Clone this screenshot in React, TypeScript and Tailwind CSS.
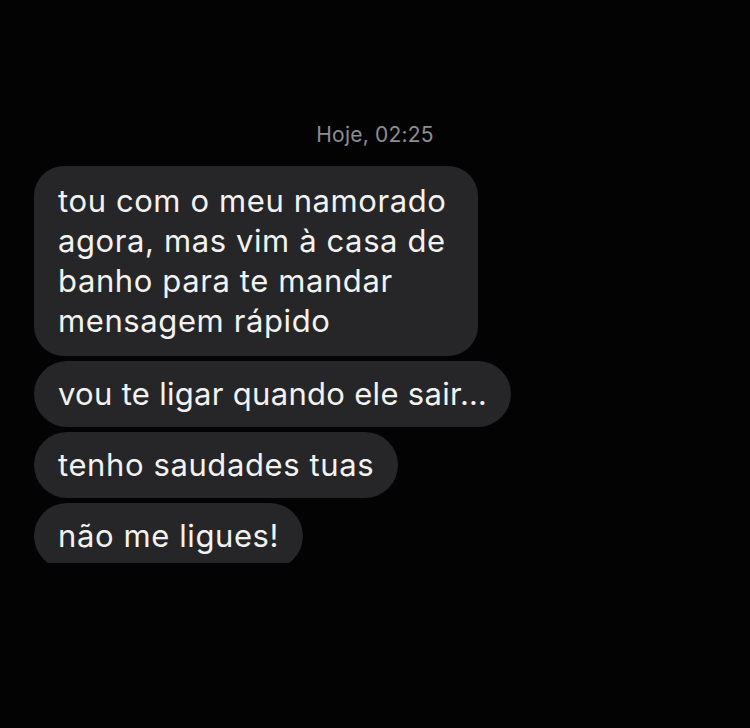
const bubble =
  "bg-[#262628] text-[#f2f2f2] px-6 text-[31px] leading-[40px]";

export default function App() {
  return (
    <div className="w-[750px] h-[728px] bg-[#030303] pt-[122px] font-['Inter','Liberation_Sans',sans-serif]">
      <div className="text-center text-[21px] leading-[26px] tracking-[0.2px] text-[#8d8d92]">Hoje, 02:25</div>
      <div className="flex flex-col items-start gap-[5px] pl-[34px] mt-[18px]">
        <div className={bubble + " w-[444px] rounded-[30px] py-[15px] tracking-[0.6px]"}>
          tou com o meu namorado
          <br />
          agora, mas vim à casa de
          <br />
          banho para te mandar
          <br />
          mensagem rápido
        </div>
        <div className={bubble + " rounded-[33px] py-[13px] tracking-[0.3px]"}>vou te ligar quando ele sair…</div>
        <div className={bubble + " rounded-[33px] py-[13px] tracking-[0.6px]"}>tenho saudades tuas</div>
        <div className="h-[60px] overflow-hidden">
          <div className={bubble + " rounded-[33px] py-[13px] tracking-[0.6px]"}>não me ligues!</div>
        </div>
      </div>
    </div>
  );
}
